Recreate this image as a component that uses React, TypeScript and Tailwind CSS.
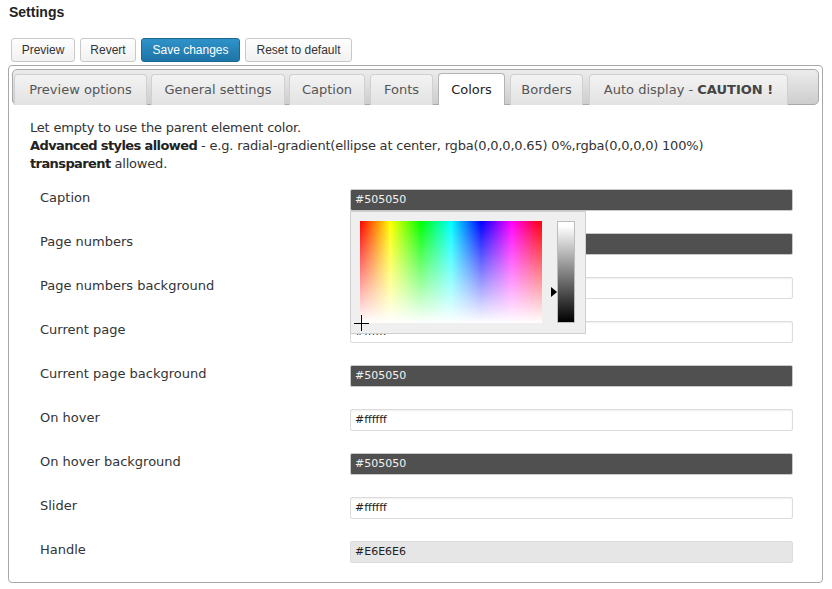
import React from "react";

type Row = { label: string; value: string; kind: "dark" | "light" | "gray" };

const rows: Row[] = [
  { label: "Caption", value: "#505050", kind: "dark" },
  { label: "Page numbers", value: "#505050", kind: "dark" },
  { label: "Page numbers background", value: "#ffffff", kind: "light" },
  { label: "Current page", value: "#ffffff", kind: "light" },
  { label: "Current page background", value: "#505050", kind: "dark" },
  { label: "On hover", value: "#ffffff", kind: "light" },
  { label: "On hover background", value: "#505050", kind: "dark" },
  { label: "Slider", value: "#ffffff", kind: "light" },
  { label: "Handle", value: "#E6E6E6", kind: "gray" },
];

const tabs = [
  { label: "Preview options", cls: "w-[133px] ml-0" },
  { label: "General settings", cls: "w-[134px] ml-[4px]" },
  { label: "Caption", cls: "w-[76px] ml-[4px]" },
  { label: "Fonts", cls: "w-[63px] ml-[5px]" },
  { label: "Colors", cls: "w-[67px] ml-[5px]", active: true },
  { label: "Borders", cls: "w-[73px] ml-[5px]" },
  { label: "Auto display", cls: "w-[199px] ml-[6px]", caution: true },
];

function inputCls(kind: Row["kind"]) {
  if (kind === "dark")
    return "bg-[#505050] text-[#f2f2f2] border-[#c8c8c8]";
  if (kind === "gray") return "bg-[#e6e6e6] text-[#222] border-[#dcdcdc]";
  return "bg-white text-[#222] border-[#dcdcdc] shadow-[inset_0_1px_2px_rgba(0,0,0,0.07)]";
}

function ColorPicker() {
  return (
    <div className="absolute left-0 top-[22px] z-10 w-[236px] h-[123px] bg-[#efefef] border border-[#cfcfcf]">
      <div className="absolute left-[9px] top-[9px] w-[182px] h-[102px] bg-[linear-gradient(to_right,#ff0000,#ffff00,#00ff00,#00ffff,#0000ff,#ff00ff,#ff0000)]">
        <div className="w-full h-full bg-[linear-gradient(to_bottom,rgba(255,255,255,0),#ffffff)]" />
      </div>
      <div className="absolute left-[206px] top-[9px] w-[18px] h-[102px] border border-[#bdbdbd] bg-[linear-gradient(to_bottom,#ffffff_4%,#000000)]" />
      <div className="absolute left-[200px] top-[75px] w-0 h-0 border-y-[5px] border-y-transparent border-l-[6px] border-l-black" />
      <div className="absolute left-[3px] top-[111px] w-[15px] h-px bg-black" />
      <div className="absolute left-[10px] top-[103px] w-px h-[16px] bg-black" />
    </div>
  );
}

export default function App() {
  return (
    <div className="w-[832px] h-[589px] bg-white relative overflow-hidden">
      <div className="pl-[9px] pt-[4px] h-[38px] font-['Liberation_Sans',Arial,sans-serif] text-[14px] leading-[16px] font-bold text-[#222]">
        Settings
      </div>
      <div className="flex gap-[5px] pl-[11px] h-[24px] font-['Liberation_Sans',Arial,sans-serif] text-[12px]">
        <button className="w-[64px] h-[24px] rounded-[3px] border border-[#c9c9c9] bg-[linear-gradient(#fefefe,#f1f1f1)] text-[#333]">
          Preview
        </button>
        <button className="w-[56px] h-[24px] rounded-[3px] border border-[#c9c9c9] bg-[linear-gradient(#fefefe,#f1f1f1)] text-[#333]">
          Revert
        </button>
        <button className="w-[99px] h-[24px] rounded-[3px] border border-[#1b6895] bg-[linear-gradient(#2f93c9,#1e74a6)] text-white">
          Save changes
        </button>
        <button className="w-[107px] h-[24px] rounded-[3px] border border-[#c9c9c9] bg-[linear-gradient(#fefefe,#f1f1f1)] text-[#333]">
          Reset to default
        </button>
      </div>
      <div className="ml-[8px] mt-[3px] w-[815px] rounded-[4px] border border-[#a8a8a8] p-[3px] font-['DejaVu_Sans',Verdana,sans-serif]">
        <div className="h-[36px] rounded-[5px] border border-[#a9a9a9] bg-[linear-gradient(#ececec,#cdcdcd)] flex items-end pl-[1px]">
          {tabs.map((t) => (
            <div
              key={t.label}
              className={
                t.cls +
                " h-[31px] -mb-px flex items-center justify-center rounded-t-[4px] border border-b-0 text-[13px] whitespace-nowrap " +
                (t.active
                  ? "bg-white border-[#b3b3b3] text-[#222] h-[32px]"
                  : "bg-[linear-gradient(#f3f3f3,#e2e2e2)] border-[#d0d0d0] text-[#555]")
              }
            >
              {t.caution ? (
                <span>
                  Auto display - <b className="text-[#444]">CAUTION !</b>
                </span>
              ) : (
                t.label
              )}
            </div>
          ))}
        </div>
        <div className="pl-[18px] pt-[14px] pb-[16px] text-[13px] text-[#333]">
          <div className="leading-[18px] tracking-[-0.2px]">
            <div>Let empty to use the parent element color.</div>
            <div>
              <b className="text-[#222] tracking-[-0.6px]">Advanced styles allowed</b> - e.g. radial-gradient(ellipse at center, rgba(0,0,0,0.65) 0%,rgba(0,0,0,0) 100%)
            </div>
            <div>
              <b className="text-[#222] tracking-[-0.6px]">transparent</b> allowed.
            </div>
          </div>
          <div className="mt-[16px] pl-[10px] flex flex-col gap-[22px]">
            {rows.map((r, i) => (
              <div key={r.label} className="flex h-[22px]">
                <div className="w-[310px] pt-[1px] leading-[16px] text-[#333]">{r.label}</div>
                <div className="relative">
                  <div
                    className={
                      "w-[443px] h-[22px] rounded-[2px] border pl-[4px] flex items-center text-[11px] " +
                      inputCls(r.kind)
                    }
                  >
                    {r.value}
                  </div>
                  {i === 0 && <ColorPicker />}
                </div>
              </div>
            ))}
          </div>
        </div>
      </div>
    </div>
  );
}
